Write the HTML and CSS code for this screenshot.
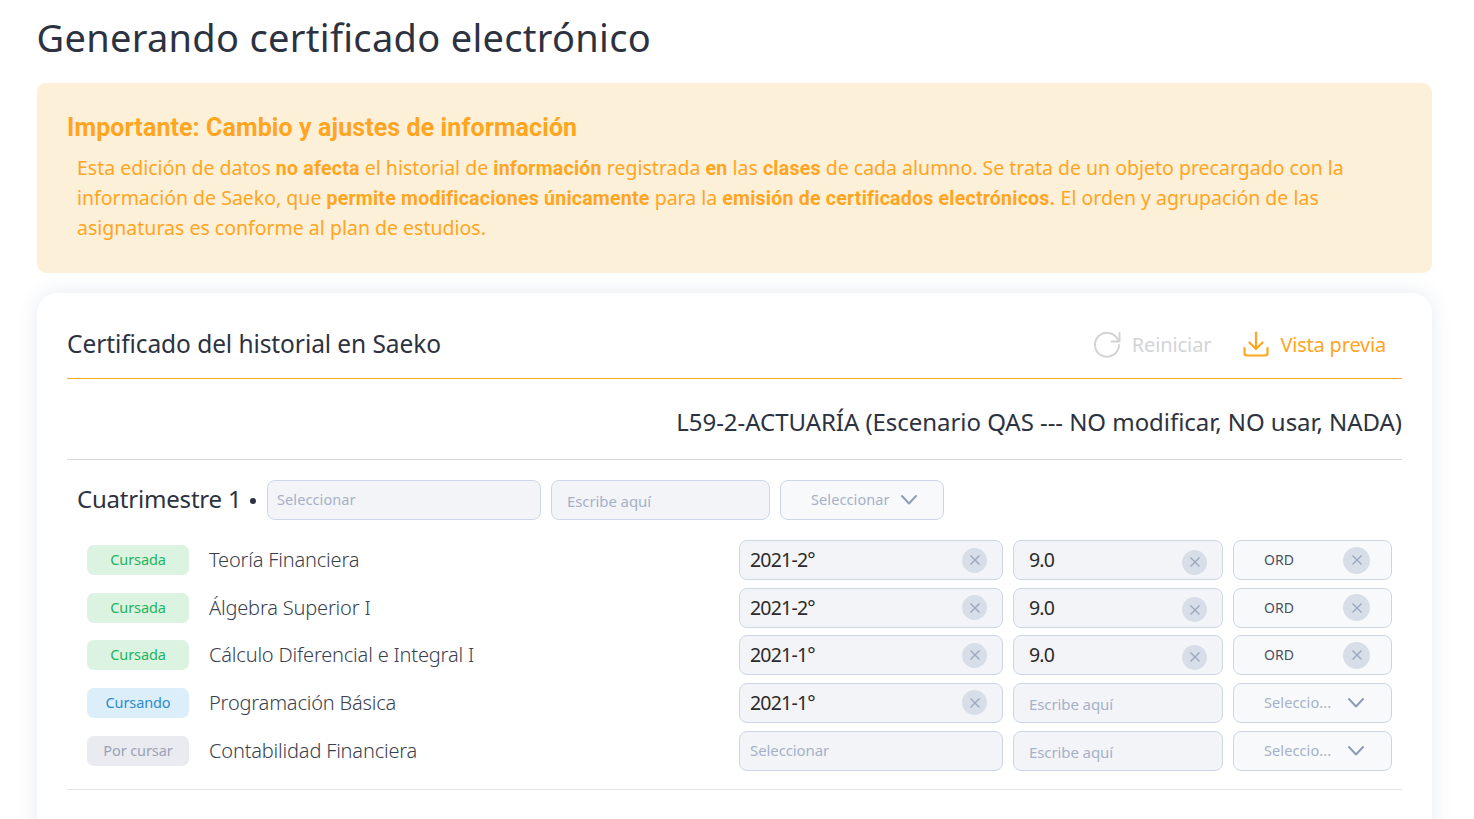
FILE: index.html
```html
<!DOCTYPE html>
<html lang="es">
<head>
<meta charset="utf-8">
<title>Generando certificado electrónico</title>
<link rel="stylesheet" href="styles.css">
</head>
<body>
<h1 class="page-title">Generando certificado electrónico</h1>
<section class="alert">
  <h2 class="alert-title">Importante: Cambio y ajustes de información</h2>
  <p class="alert-text">Esta edición de datos <b>no afecta</b> el historial de <b>información</b> registrada <b>en</b> las <b>clases</b> de cada alumno. Se trata de un objeto precargado con la<br>información de Saeko, que <b>permite modificaciones únicamente</b> para la <b>emisión de certificados electrónicos.</b> El orden y agrupación de las<br>asignaturas es conforme al plan de estudios.</p>
</section>
<main class="card">
  <header class="card-head">
    <h2 class="card-title">Certificado del historial en Saeko</h2>
    <div class="actions">
      <span class="action action-off">
        <svg class="icon-action" viewBox="0 0 28 28" fill="none" stroke="currentColor" stroke-width="2" stroke-linecap="round" stroke-linejoin="round"><path d="M25.4 11A12 12 0 1 0 26 15"/><path d="M26.5 3v8.5h-8"/></svg>
        Reiniciar
      </span>
      <span class="action action-on">
        <svg class="icon-action" viewBox="0 0 28 28" fill="none" stroke="currentColor" stroke-width="2.2" stroke-linecap="round" stroke-linejoin="round"><path d="M14 2.5v16"/><path d="M7.5 12.5l6.5 6.5 6.5-6.5"/><path d="M2.5 18v5a2.5 2.5 0 0 0 2.5 2.5h18a2.5 2.5 0 0 0 2.5-2.5v-5"/></svg>
        Vista previa
      </span>
    </div>
  </header>
  <div class="program">L59-2-ACTUARÍA (Escenario QAS --- NO modificar, NO usar, NADA)</div>
  <div class="term-row">
    <span class="term-name">Cuatrimestre 1</span>
    <span class="term-dot"></span>
    <div class="field field-a"><span class="ph ph-small">Seleccionar</span></div>
    <div class="field field-b"><span class="ph ph-low">Escribe aquí</span></div>
    <div class="picker picker-term"><span class="ph ph-small">Seleccionar</span><svg class="chev" viewBox="0 0 18 12" fill="none" stroke="currentColor" stroke-width="2" stroke-linecap="round" stroke-linejoin="round"><path d="M2 2l7 7.5L16 2"/></svg></div>
  </div>
  <div class="rows">
    <div class="row">
      <span class="badge badge-done">Cursada</span>
      <span class="subject">Teoría Financiera</span>
      <div class="field col-period"><span class="val">2021-2°</span><span class="clear"><svg viewBox="0 0 12 12" class="x"><path d="M1.5 1.5l9 9M10.5 1.5l-9 9"/></svg></span></div>
      <div class="field col-grade"><span class="val">9.0</span><span class="clear clear-low"><svg viewBox="0 0 12 12" class="x"><path d="M1.5 1.5l9 9M10.5 1.5l-9 9"/></svg></span></div>
      <div class="picker col-type"><span class="code">ORD</span><span class="clear clear-big"><svg viewBox="0 0 12 12" class="x"><path d="M1.5 1.5l9 9M10.5 1.5l-9 9"/></svg></span></div>
    </div>
    <div class="row">
      <span class="badge badge-done">Cursada</span>
      <span class="subject">Álgebra Superior I</span>
      <div class="field col-period"><span class="val">2021-2°</span><span class="clear"><svg viewBox="0 0 12 12" class="x"><path d="M1.5 1.5l9 9M10.5 1.5l-9 9"/></svg></span></div>
      <div class="field col-grade"><span class="val">9.0</span><span class="clear clear-low"><svg viewBox="0 0 12 12" class="x"><path d="M1.5 1.5l9 9M10.5 1.5l-9 9"/></svg></span></div>
      <div class="picker col-type"><span class="code">ORD</span><span class="clear clear-big"><svg viewBox="0 0 12 12" class="x"><path d="M1.5 1.5l9 9M10.5 1.5l-9 9"/></svg></span></div>
    </div>
    <div class="row">
      <span class="badge badge-done">Cursada</span>
      <span class="subject">Cálculo Diferencial e Integral I</span>
      <div class="field col-period"><span class="val">2021-1°</span><span class="clear"><svg viewBox="0 0 12 12" class="x"><path d="M1.5 1.5l9 9M10.5 1.5l-9 9"/></svg></span></div>
      <div class="field col-grade"><span class="val">9.0</span><span class="clear clear-low"><svg viewBox="0 0 12 12" class="x"><path d="M1.5 1.5l9 9M10.5 1.5l-9 9"/></svg></span></div>
      <div class="picker col-type"><span class="code">ORD</span><span class="clear clear-big"><svg viewBox="0 0 12 12" class="x"><path d="M1.5 1.5l9 9M10.5 1.5l-9 9"/></svg></span></div>
    </div>
    <div class="row">
      <span class="badge badge-now">Cursando</span>
      <span class="subject">Programación Básica</span>
      <div class="field col-period"><span class="val">2021-1°</span><span class="clear"><svg viewBox="0 0 12 12" class="x"><path d="M1.5 1.5l9 9M10.5 1.5l-9 9"/></svg></span></div>
      <div class="field col-grade"><span class="ph ph-low">Escribe aquí</span></div>
      <div class="picker col-type picker-open"><span class="ph ph-small">Seleccio...</span><svg class="chev" viewBox="0 0 18 12" fill="none" stroke="currentColor" stroke-width="2" stroke-linecap="round" stroke-linejoin="round"><path d="M2 2l7 7.5L16 2"/></svg></div>
    </div>
    <div class="row">
      <span class="badge badge-todo">Por cursar</span>
      <span class="subject">Contabilidad Financiera</span>
      <div class="field col-period"><span class="ph">Seleccionar</span></div>
      <div class="field col-grade"><span class="ph ph-low">Escribe aquí</span></div>
      <div class="picker col-type picker-open"><span class="ph ph-small">Seleccio...</span><svg class="chev" viewBox="0 0 18 12" fill="none" stroke="currentColor" stroke-width="2" stroke-linecap="round" stroke-linejoin="round"><path d="M2 2l7 7.5L16 2"/></svg></div>
    </div>
  </div>
</main>
</body>
</html>
```

FILE: styles.css
```css
* { box-sizing: border-box; }
html { height: 100%; overflow: hidden; background: #fff; }
body {
  margin: 0;
  height: 819px;
  overflow: hidden;
  padding: 0 42px 0 37px;
  font-family: "Noto Sans", "Open Sans", sans-serif;
  color: #2d3240;
}
.page-title {
  margin: 0 0 0 -0.5px;
  height: 83px;
  padding-top: 10px;
  font-size: 38px;
  line-height: 55px;
  font-weight: 400;
  letter-spacing: 0.3px;
  white-space: nowrap;
}
.alert {
  height: 190px;
  margin-bottom: 20px;
  padding: 30px 30px;
  background: #fdf0d9;
  border-radius: 9px;
  color: #ffa51f;
}
.alert-title {
  margin: 0;
  font-family: Roboto, "Noto Sans", sans-serif;
  font-size: 25px;
  line-height: 30px;
  font-weight: 700;
  letter-spacing: 0.09px;
  white-space: nowrap;
}
.alert-text {
  margin: 0;
  padding: 10px 0 0 10px;
  font-size: 19.5px;
  line-height: 30px;
  letter-spacing: 0;
  white-space: nowrap;
}
.alert-text b {
  font-family: Roboto, "Noto Sans", sans-serif;
  font-weight: 700;
  line-height: 0;
  letter-spacing: 0.24px;
}
.card {
  height: 640px;
  padding: 0 30px;
  background: #fff;
  border-radius: 20px;
  box-shadow: 0 0 20px rgba(60, 80, 130, 0.12);
}
.card-head {
  height: 86px;
  display: flex;
  align-items: center;
  justify-content: space-between;
  padding: 18px 16px 0 0;
  border-bottom: 1px solid #ffa51f;
}
.card-title {
  margin: 0 0 2px;
  font-size: 24.5px;
  font-weight: 400;
  letter-spacing: -0.08px;
  white-space: nowrap;
}
.actions { display: flex; align-items: center; gap: 31px; }
.action {
  display: flex;
  align-items: center;
  gap: 10px;
  font-size: 20px;
  white-space: nowrap;
}
.action-off { color: #d3d4d6; gap: 11px; letter-spacing: -0.1px; }
.action-on { color: #ffa51f; letter-spacing: -0.2px; }
.icon-action { width: 28px; height: 28px; flex: none; margin-top: -2px; }
.program {
  height: 81px;
  padding-top: 23px;
  border-bottom: 1px solid #d5d8dd;
  text-align: right;
  font-size: 24px;
  line-height: 40px;
  letter-spacing: -0.05px;
  white-space: nowrap;
}
.term-row {
  display: flex;
  align-items: center;
  height: 40px;
  margin-top: 20px;
  padding-left: 10px;
}
.term-name { font-size: 24px; letter-spacing: -0.2px; white-space: nowrap; width: 173px; padding-bottom: 4px; }
.term-dot {
  width: 6px;
  height: 6px;
  margin: 2px 0 0 0;
  border-radius: 50%;
  background: #2d3240;
  flex: none;
}
.field, .picker {
  display: flex;
  align-items: center;
  height: 40px;
  flex: none;
  border: 1px solid #cdd6e6;
  border-radius: 8px;
}
.field { background: #f3f4f7; padding: 0 15px 0 10px; justify-content: space-between; }
.picker { background: #f8f9fb; padding: 0 25px 0 30px; justify-content: space-between; }
.field-a { width: 274px; margin-left: 11px; padding-left: 9px; }
.field-b { width: 219px; margin-left: 10px; padding-left: 15px; }
.picker-term { width: 164px; margin-left: 10px; }
.ph { padding-bottom: 2px; font-size: 15px; color: #a5b1c9; white-space: nowrap; letter-spacing: -0.1px; }
.ph-small { font-size: 14.5px; letter-spacing: 0.1px; }
.ph-low { padding-top: 4px; }
.val { padding-bottom: 1px; font-size: 19.5px; color: #2d2a2a; letter-spacing: -0.8px; white-space: nowrap; }
.code { padding-bottom: 1px; font-size: 14px; color: #4b5160; }
.chev { width: 18px; height: 12px; color: #8f9cb8; flex: none; }
.rows {
  display: flex;
  flex-direction: column;
  gap: 7.65px;
  margin-top: 20px;
  padding: 0 10px 18.4px;
  border-bottom: 1px solid #e2e4e8;
}
.row { display: flex; align-items: center; height: 40px; gap: 10px; }
.badge {
  width: 102px;
  height: 30px;
  margin-left: 10px;
  padding-bottom: 2px;
  flex: none;
  display: flex;
  align-items: center;
  justify-content: center;
  border-radius: 7px;
  font-size: 14.5px;
  letter-spacing: -0.1px;
  white-space: nowrap;
}
.badge-done { background: #dcf3e2; color: #22b35e; }
.badge-now { background: #dceefa; color: #2d8ccc; }
.badge-todo { background: #e9ebf1; color: #9aa3b5; }
.subject {
  flex: 1;
  padding: 0 0 1px 10px;
  font-size: 20px;
  font-weight: 300;
  color: #3a3f4e;
  letter-spacing: -0.18px;
  white-space: nowrap;
}
.col-period { width: 264px; }
.col-grade { width: 210px; padding-left: 15px; }
.col-type { width: 159px; padding-right: 26px; }
.col-type:has(.clear) { padding-right: 21px; }
.clear {
  width: 25px;
  height: 25px;
  flex: none;
  display: flex;
  align-items: center;
  justify-content: center;
  border-radius: 50%;
  background: #d8dee7;
}
.clear-low { margin-top: 4px; }
.clear-big { width: 27px; height: 27px; }
.x { width: 12px; height: 12px; fill: none; stroke: #9aa7c0; stroke-width: 1.4; }
```
